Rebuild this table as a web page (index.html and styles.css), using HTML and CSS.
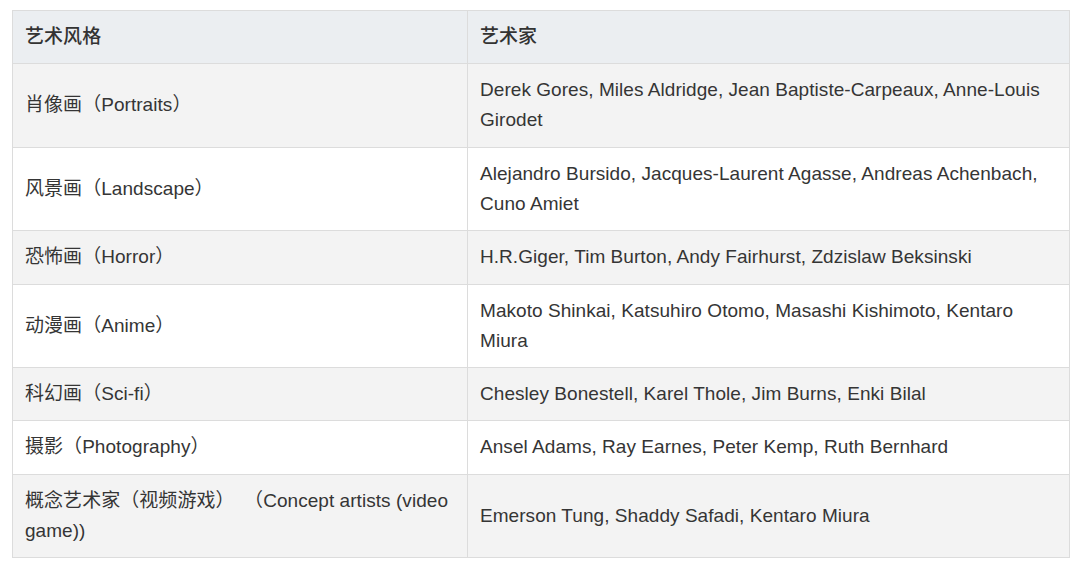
FILE: index.html
```html
<!DOCTYPE html>
<html lang="zh">
<head>
<meta charset="utf-8">
<link rel="stylesheet" href="styles.css">
</head>
<body>
<div class="page">
<table class="art-table">
  <colgroup><col class="col-style"><col class="col-artist"></colgroup>
  <thead>
    <tr><th>艺术风格</th><th>艺术家</th></tr>
  </thead>
  <tbody>
    <tr><td>肖像画（Portraits）</td><td>Derek Gores, Miles Aldridge, Jean Baptiste-Carpeaux, Anne-Louis Girodet</td></tr>
    <tr><td>风景画（Landscape）</td><td>Alejandro Bursido, Jacques-Laurent Agasse, Andreas Achenbach, Cuno Amiet</td></tr>
    <tr><td>恐怖画（Horror）</td><td>H.R.Giger, Tim Burton, Andy Fairhurst, Zdzislaw Beksinski</td></tr>
    <tr><td>动漫画（Anime）</td><td>Makoto Shinkai, Katsuhiro Otomo, Masashi Kishimoto, Kentaro Miura</td></tr>
    <tr><td>科幻画（Sci-fi）</td><td>Chesley Bonestell, Karel Thole, Jim Burns, Enki Bilal</td></tr>
    <tr><td>摄影（Photography）</td><td>Ansel Adams, Ray Earnes, Peter Kemp, Ruth Bernhard</td></tr>
    <tr><td>概念艺术家（视频游戏）&ensp;（Concept artists (video game))</td><td>Emerson Tung, Shaddy Safadi, Kentaro Miura</td></tr>
  </tbody>
</table>
</div>
</body>
</html>
```
FILE: styles.css
```css
html, body {
  margin: 0;
  padding: 0;
  background: #ffffff;
}
.page {
  padding: 10px 11px 0 12px;
}
.art-table {
  width: 1057px;
  border-collapse: collapse;
  font-family: "Liberation Sans", "Noto Sans CJK SC", sans-serif;
  font-size: 19px;
  letter-spacing: 0.05px;
  line-height: 30px;
  color: #353535;
  table-layout: fixed;
}
.col-style {
  width: 455px;
}
.col-artist {
  width: 602px;
}
.art-table th,
.art-table td {
  border: 1px solid #dcdcdc;
  padding: 11px 12px 11.4px;
  text-align: left;
  vertical-align: middle;
}
.art-table th {
  background: #ebeef1;
  font-weight: 500;
  color: #333333;
}
.art-table tbody tr:nth-child(odd) td {
  background: #f3f3f3;
}
.art-table tbody tr:nth-child(even) td {
  background: #ffffff;
}
```
